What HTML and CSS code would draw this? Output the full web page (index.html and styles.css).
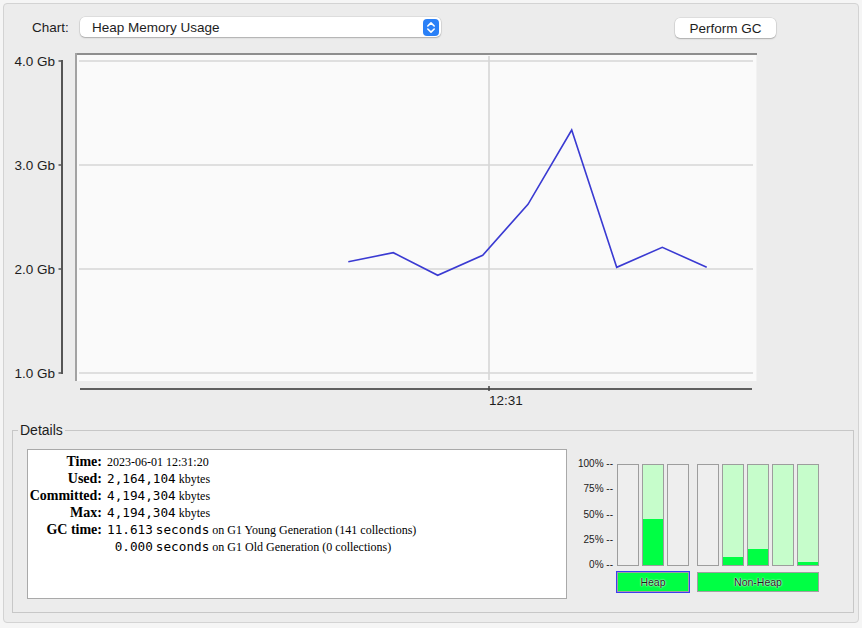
FILE: index.html
```html
<!DOCTYPE html>
<html>
<head>
<meta charset="utf-8">
<title>Memory</title>
<link rel="stylesheet" href="styles.css">
</head>
<body>
<div class="window">
  <div class="toolbar">
    <span class="chart-label">Chart:</span>
    <div class="select">
      <span class="select-text">Heap Memory Usage</span>
      <svg class="stepper" width="16" height="17" viewBox="0 0 16 17">
        <rect x="0" y="0" width="16" height="17" rx="4" fill="#2a80f7"/>
        <polyline points="4.8,7 8,3.9 11.2,7" fill="none" stroke="#fff" stroke-width="1.6" stroke-linecap="round" stroke-linejoin="round"/>
        <polyline points="4.8,10 8,13.1 11.2,10" fill="none" stroke="#fff" stroke-width="1.6" stroke-linecap="round" stroke-linejoin="round"/>
      </svg>
    </div>
    <div class="spacer"></div>
    <button class="btn">Perform GC</button>
  </div>

  <svg class="chart" width="760" height="370" viewBox="4 42 760 370">
    <text class="ax" x="55" y="65.5" text-anchor="end">4.0 Gb</text>
    <text class="ax" x="55" y="169.5" text-anchor="end">3.0 Gb</text>
    <text class="ax" x="55" y="273.5" text-anchor="end">2.0 Gb</text>
    <text class="ax" x="55" y="377.5" text-anchor="end">1.0 Gb</text>
    <line x1="62" y1="60" x2="62" y2="374" stroke="#555" stroke-width="2"/>
    <g stroke="#555" stroke-width="1.5">
      <line x1="58.5" y1="61" x2="62" y2="61"/>
      <line x1="58.5" y1="165" x2="62" y2="165"/>
      <line x1="58.5" y1="269" x2="62" y2="269"/>
      <line x1="58.5" y1="373" x2="62" y2="373"/>
    </g>

    <rect x="75" y="53" width="682" height="328" fill="#fafafa"/>
    <line x1="75" y1="54" x2="757" y2="54" stroke="#8e8e8e" stroke-width="2"/>
    <line x1="76" y1="53" x2="76" y2="381" stroke="#a2a2a2" stroke-width="2"/>
    <line x1="756.5" y1="55" x2="756.5" y2="381" stroke="#f2f2f2" stroke-width="1"/>

    <g stroke="#d6d6d6" stroke-width="1.6">
      <line x1="79" y1="61" x2="753" y2="61"/>
      <line x1="79" y1="165" x2="753" y2="165"/>
      <line x1="79" y1="269" x2="753" y2="269"/>
      <line x1="79" y1="373" x2="753" y2="373"/>
      <line x1="489" y1="56" x2="489" y2="380"/>
    </g>

    <polyline points="348.3,261.7 393.3,252.7 437.7,275.3 482.7,255.3 528,204.3 571.7,130 616.7,267.3 662.3,247.3 706.7,267.3" fill="none" stroke="#3a3ad2" stroke-width="1.6" stroke-linejoin="miter"/>

    <line x1="80" y1="389" x2="752" y2="389" stroke="#5e5e5e" stroke-width="2"/>
    <line x1="489" y1="386" x2="489" y2="391" stroke="#444" stroke-width="1.5"/>
    <text class="ax" x="489" y="404.5">12:31</text>
  </svg>

  <fieldset class="details">
    <legend>Details</legend>
    <div class="details-body">
      <div class="info">
        <span class="k">Time:</span><span class="v">2023-06-01 12:31:20</span>
        <span class="k">Used:</span><span class="v"><span class="mono">2,164,104</span> kbytes</span>
        <span class="k">Committed:</span><span class="v"><span class="mono">4,194,304</span> kbytes</span>
        <span class="k">Max:</span><span class="v"><span class="mono">4,194,304</span> kbytes</span>
        <span class="k">GC time:</span><span class="v"><span class="mono">11.613</span> <span class="mono">seconds</span> on G1 Young Generation (141 collections)</span>
        <span class="k"></span><span class="v"><span class="mono"> 0.000</span> <span class="mono">seconds</span> on G1 Old Generation (0 collections)</span>
      </div>
      <div class="pools">
        <div class="scale">
          <span>100% --</span>
          <span>75% --</span>
          <span>50% --</span>
          <span>25% --</span>
          <span>0% --</span>
        </div>
        <div class="group">
          <div class="bars">
            <div class="bar"></div>
            <div class="bar"><div class="cap" style="height:100%"><div class="used" style="height:46%"></div></div></div>
            <div class="bar"></div>
          </div>
          <button class="pool-btn focused">Heap</button>
        </div>
        <div class="group">
          <div class="bars">
            <div class="bar"></div>
            <div class="bar"><div class="cap" style="height:100%"><div class="used" style="height:8%"></div></div></div>
            <div class="bar"><div class="cap" style="height:100%"><div class="used" style="height:16%"></div></div></div>
            <div class="bar"><div class="cap" style="height:100%"><div class="used" style="height:0%"></div></div></div>
            <div class="bar"><div class="cap" style="height:100%"><div class="used" style="height:3%"></div></div></div>
          </div>
          <button class="pool-btn">Non-Heap</button>
        </div>
      </div>
    </div>
  </fieldset>
</div>
</body>
</html>
```

FILE: styles.css
```css
html, body {
  margin: 0;
  padding: 0;
}
body {
  background: #f5f5f5;
  font-family: "Liberation Sans", Arial, sans-serif;
  color: #1d1d1d;
}
.window {
  margin: 3px;
  border: 1px solid #d3d3d3;
  border-radius: 4px;
  background: #ececec;
  display: flex;
  flex-direction: column;
}
.toolbar {
  display: flex;
  align-items: center;
  height: 20px;
  padding: 13px 82px 5px 28px;
}
.chart-label {
  width: 36px;
  margin-right: 12px;
  font-size: 13.5px;
}
.select {
  width: 361px;
  height: 20px;
  box-sizing: border-box;
  background: #fff;
  border-radius: 5px;
  box-shadow: 0 0 0 0.5px rgba(0, 0, 0, 0.12), 0 1px 1.5px rgba(0, 0, 0, 0.22);
  display: flex;
  align-items: center;
  padding: 0 2px 0 12px;
  font-size: 13.5px;
}
.select-text {
  flex: 1;
}
.stepper {
  display: block;
}
.spacer {
  flex: 1;
}
.btn {
  width: 101px;
  height: 20px;
  margin-top: 2px;
  padding: 0;
  background: #fff;
  border: 0;
  border-radius: 5px;
  box-shadow: 0 0 0 0.5px rgba(0, 0, 0, 0.12), 0 1px 1.5px rgba(0, 0, 0, 0.22);
  font-family: "Liberation Sans", Arial, sans-serif;
  font-size: 13.5px;
  color: #1d1d1d;
}
.chart {
  display: block;
}
.ax {
  font-family: "Liberation Sans", Arial, sans-serif;
  font-size: 13.5px;
  fill: #1d1d1d;
}
.details {
  margin: 10px 4px 9px 8px;
  border: 1px solid #c7c7c7;
  padding: 11px 0 13px 5px;
  min-width: 0;
}
.details legend {
  padding: 0 2px;
  font-size: 14px;
  line-height: 16px;
  color: #1d1d1d;
}
.details-body {
  display: flex;
  align-items: flex-start;
  margin-left: 9px;
}
.info {
  width: 540px;
  height: 150px;
  box-sizing: border-box;
  background: #fff;
  border: 1px solid #a9a9a9;
  padding-top: 3px;
  display: grid;
  grid-template-columns: 74px auto;
  grid-auto-rows: 17px;
  column-gap: 5px;
  align-content: start;
  align-items: baseline;
  color: #000;
}
.k {
  font-family: "Liberation Serif", "Times New Roman", serif;
  font-weight: bold;
  font-size: 14px;
  line-height: 17px;
  text-align: right;
}
.v {
  font-family: "Liberation Serif", "Times New Roman", serif;
  font-size: 12px;
  line-height: 17px;
  white-space: pre;
}
.mono {
  font-family: "DejaVu Sans Mono", monospace;
  font-size: 12.7px;
}
.pools {
  display: flex;
  align-items: flex-start;
  margin-left: 10px;
}
.scale {
  width: 36px;
  height: 113px;
  margin-top: 9px;
  display: flex;
  flex-direction: column;
  justify-content: space-between;
  align-items: flex-end;
  font-size: 10px;
  line-height: 12px;
  color: #1a1a1a;
}
.group {
  display: flex;
  flex-direction: column;
  margin-top: 15px;
  margin-left: 4px;
}
.group + .group {
  margin-left: 8px;
}
.bars {
  display: flex;
  gap: 3px;
}
.bar {
  width: 22px;
  height: 102px;
  box-sizing: border-box;
  border: 1px solid #9d9d9d;
  background: #eeeeee;
  display: flex;
  flex-direction: column;
  justify-content: flex-end;
}
.cap {
  background: #c6fdcb;
  display: flex;
  flex-direction: column;
  justify-content: flex-end;
}
.used {
  background: #00ff44;
}
.pool-btn {
  margin-top: 6px;
  height: 20px;
  padding: 0;
  box-sizing: border-box;
  border: 1px solid #a0a0a0;
  background: #00ff44;
  font-family: "Liberation Sans", Arial, sans-serif;
  font-size: 10.5px;
  line-height: 18px;
  color: #1a1a1a;
  text-shadow: 0 0 1px #fff, 0 0 2px #fff;
}
.pool-btn.focused {
  box-shadow: 0 0 0 1px #3c3cf4;
}
```
